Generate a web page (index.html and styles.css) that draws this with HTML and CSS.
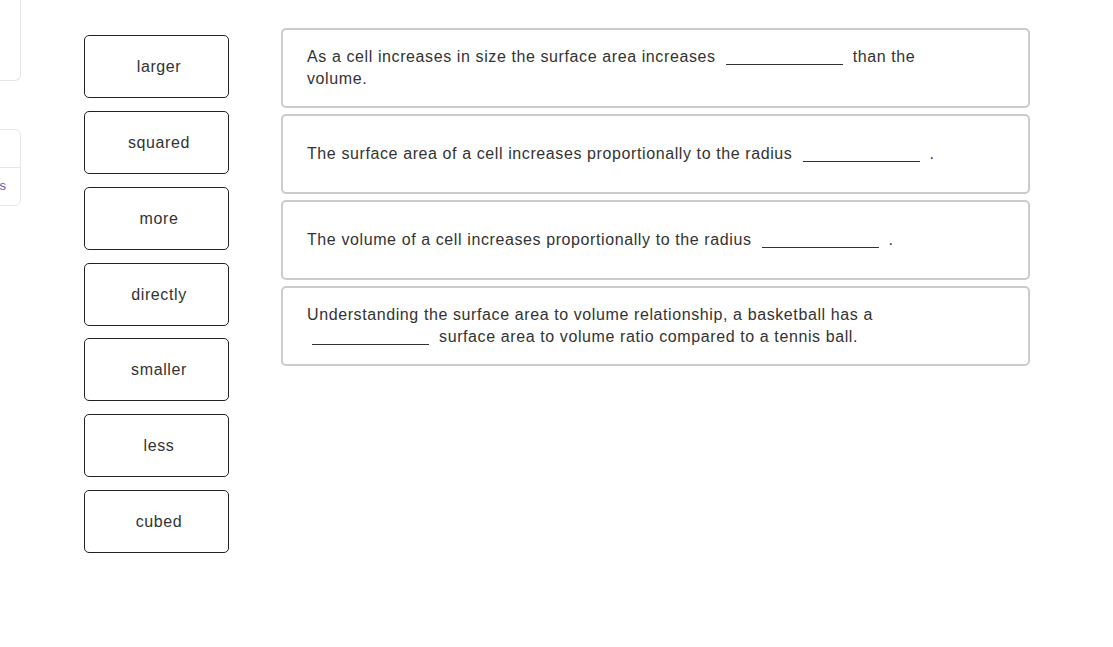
FILE: index.html
```html
<!DOCTYPE html>
<html lang="en">
<head>
    <meta charset="UTF-8">
    <meta name="viewport" content="width=device-width, initial-scale=1.0">
    <title>Surface Area and Volume</title>
    <link rel="stylesheet" href="styles.css">
</head>
<body>
    <div class="page">
        <!-- sisa panel samping yang terpotong -->
        <div class="sidebar">
            <div class="side-card side-top"></div>
            <div class="side-card side-bottom">
                <div class="side-row"></div>
                <div class="side-row side-link">Questions</div>
            </div>
        </div>

        <div class="main">
            <div class="crumb"><span>McGraw Hill Education</span></div>

            <div class="quiz">
                <!-- daftar kata yang bisa dipilih -->
                <div class="bank">
                    <div class="word">larger</div>
                    <div class="word">squared</div>
                    <div class="word">more</div>
                    <div class="word">directly</div>
                    <div class="word">smaller</div>
                    <div class="word">less</div>
                    <div class="word">cubed</div>
                </div>

                <!-- kalimat dengan isian kosong -->
                <div class="answers">
                    <div class="answer">
                        <p>As a cell increases in size the surface area increases <span class="blank"></span> than the volume.</p>
                    </div>
                    <div class="answer">
                        <p>The surface area of a cell increases proportionally to the radius <span class="blank"></span> .</p>
                    </div>
                    <div class="answer">
                        <p>The volume of a cell increases proportionally to the radius <span class="blank"></span> .</p>
                    </div>
                    <div class="answer">
                        <p>Understanding the surface area to volume relationship, a basketball has a <span class="blank"></span> surface area to volume ratio compared to a tennis ball.</p>
                    </div>
                </div>
            </div>
        </div>
    </div>
</body>
</html>
```

FILE: styles.css
```css
body {
    margin: 0;
    background-color: #ffffff;
    font-family: "Liberation Sans", Arial, sans-serif;
    color: #333333;
}

.page {
    display: flex;
}

.sidebar {
    width: 21px;
    flex-shrink: 0;
}

.side-card {
    margin-left: -12px;
    border: 1px solid #e6e6e6;
    border-radius: 6px;
    background-color: #ffffff;
}

.side-top {
    height: 80px;
    border-top: none;
    border-top-left-radius: 0;
    border-top-right-radius: 0;
}

.side-bottom {
    margin-top: 48px;
}

.side-row {
    height: 37px;
}

.side-row + .side-row {
    border-top: 1px solid #e6e6e6;
}

.side-link {
    font-size: 13px;
    line-height: 35px;
    color: #3f68b4;
    text-align: right;
    padding-right: 14px;
    white-space: nowrap;
    overflow: hidden;
    direction: rtl;
}

.main {
    flex: 1;
}

.crumb {
    height: 3px;
    overflow: hidden;
    padding-left: 224px;
}

.crumb span {
    display: block;
    margin-top: -11px;
    font-size: 12px;
    line-height: 14px;
    color: #1b5e9a;
}

.quiz {
    display: flex;
    align-items: flex-start;
    padding-left: 63px;
    margin-top: 25px;
}

.bank {
    display: flex;
    flex-direction: column;
    gap: 12.85px;
    width: 145px;
    margin-top: 7px;
}

.word {
    height: 60px;
    border: 1px solid #222222;
    border-radius: 5px;
    padding: 1px 0 0 5px;
    display: flex;
    align-items: center;
    justify-content: center;
    font-size: 16px;
    letter-spacing: 0.6px;
}

.answers {
    display: flex;
    flex-direction: column;
    gap: 6px;
    width: 749px;
    margin-left: 52px;
}

.answer {
    border: 2px solid #cccccc;
    border-radius: 5px;
    padding: 16px 24px;
    min-height: 44px;
    display: flex;
    align-items: center;
}

.answer p {
    margin: 0;
    font-size: 16px;
    line-height: 22px;
    letter-spacing: 0.6px;
    max-width: 640px;
}

.blank {
    display: inline-block;
    width: 117px;
    height: 15px;
    margin: 0 5px;
    border-bottom: 1px solid #333333;
    vertical-align: -3px;
}
```
